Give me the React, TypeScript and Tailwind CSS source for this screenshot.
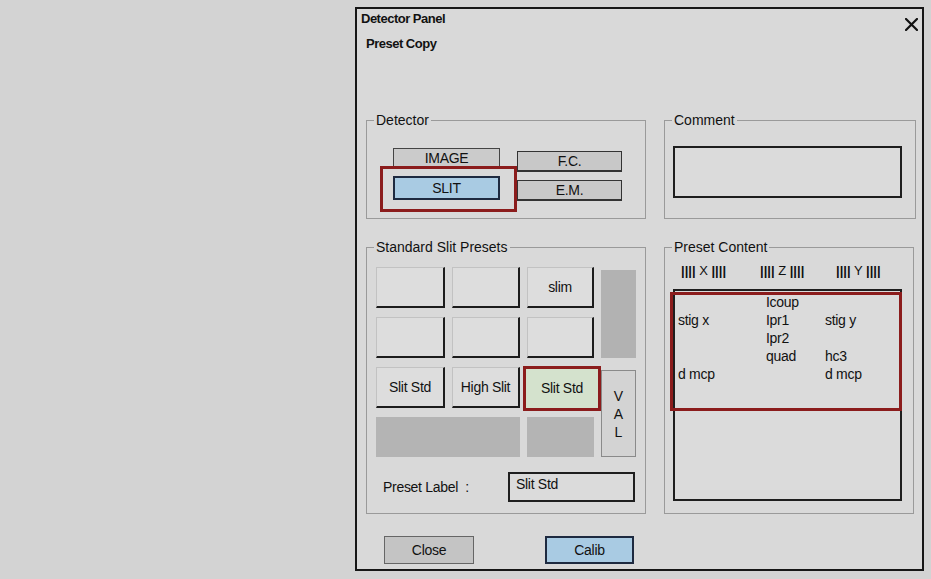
import React from "react";

// Raised preset tile used in the slit preset grid
function PresetButton({ label }: { label?: string }) {
  return (
    <button className="flex items-center justify-center bg-[#dddddd] border-t border-l border-[#c2c2c2] border-r-2 border-b-2 border-r-[#1c1c1c] border-b-[#1c1c1c] text-[14px] text-[#111] tracking-[-0.3px]">
      {label}
    </button>
  );
}

function CloseIcon() {
  return (
    <svg width="13" height="13" viewBox="0 0 13 13" className="mt-[6px]">
      <path d="M1 1 L12 12 M12 1 L1 12" stroke="#111" strokeWidth="2.2" strokeLinecap="square" />
    </svg>
  );
}

const COL_X = ["", "stig x", "", "", "d mcp"];
const COL_Z = ["Icoup", "Ipr1", "Ipr2", "quad", ""];
const COL_Y = ["", "stig y", "", "hc3", "d mcp"];

function ContentColumn({ rows }: { rows: string[] }) {
  return (
    <div className="flex flex-col">
      {rows.map((r, i) => (
        <span key={i} className="h-[18px] leading-[18px] whitespace-nowrap">
          {r || "\u00a0"}
        </span>
      ))}
    </div>
  );
}

export default function App() {
  return (
    <div className="w-[931px] h-[579px] overflow-hidden bg-[#d3d3d3] pt-[7px] pl-[355px] font-['Liberation_Sans',Arial,sans-serif] text-[#111]">
      <div className="w-[569px] h-[564px] border-2 border-[#161616] bg-[#d9d9d9] flex flex-col">
        {/* Title bar */}
        <div className="flex items-start justify-between pl-[4px] pr-[4px] pt-[3px]">
          <span className="text-[13px] leading-[14px] font-bold tracking-[-0.5px]">Detector Panel</span>
          <CloseIcon />
        </div>
        <div className="ml-[9px] mt-[6px] text-[13px] leading-[14px] font-bold tracking-[-0.5px]">Preset Copy</div>

        {/* Top row: detector + comment */}
        <div className="flex gap-[18px] pl-[9px] mt-[61px]">
          <fieldset className="w-[280px] h-[107px] border border-[#9a9a9a]">
            <legend className="ml-[7px] px-[2px] text-[14px] leading-[16px]">Detector</legend>
            <div className="flex pl-[13px] pt-[20px]">
              <div className="flex flex-col w-[137px]">
                <button className="ml-[13px] w-[107px] h-[19px] bg-[#cbcbcb] border border-[#444] text-[14px] leading-[16px] tracking-[-0.3px]">
                  IMAGE
                </button>
                <div className="-mt-[1px] w-[137px] h-[46px] border-[3px] border-[#8b1c1c] pt-[7px] pl-[10px]">
                  <button className="w-[107px] h-[24px] bg-[#a9cbe3] border-2 border-[#1e2a40] text-[14px] leading-[16px] tracking-[-0.3px]">
                    SLIT
                  </button>
                </div>
              </div>
              <div className="flex flex-col gap-[8px] pt-[3px]">
                <button className="w-[105px] h-[21px] bg-[#c8c8c8] border border-b-2 border-[#333] text-[14px] leading-[16px] tracking-[-0.3px]">
                  F.C.
                </button>
                <button className="w-[105px] h-[21px] bg-[#c8c8c8] border border-b-2 border-[#333] text-[14px] leading-[16px] tracking-[-0.3px]">
                  E.M.
                </button>
              </div>
            </div>
          </fieldset>

          <fieldset className="w-[252px] h-[107px] border border-[#9a9a9a]">
            <legend className="ml-[7px] px-[2px] text-[14px] leading-[16px]">Comment</legend>
            <div className="ml-[8px] mt-[18px] w-[229px] h-[52px] border-2 border-[#1e1e1e] bg-[#dbdbdb]" />
          </fieldset>
        </div>

        {/* Bottom row: presets + preset content */}
        <div className="flex gap-[18px] pl-[9px] mt-[20px]">
          <fieldset className="w-[280px] h-[275px] border border-[#9a9a9a]">
            <legend className="ml-[7px] px-[2px] text-[14px] leading-[16px]">Standard Slit Presets</legend>
            <div className="ml-[9px] mt-[12px] grid grid-cols-[69px_68px_67px_35px] grid-rows-[41px_41px_41px_40px] gap-x-[7px] gap-y-[9px]">
              <PresetButton />
              <PresetButton />
              <PresetButton label="slim" />
              <div className="row-span-2 bg-[#b2b2b2] mt-[3px]" />
              <PresetButton />
              <PresetButton />
              <PresetButton />
              <PresetButton label="Slit Std" />
              <PresetButton label="High Slit" />
              <button className="-ml-[4px] -mr-[7px] -mt-[1px] -mb-[3px] bg-[#d4e2cd] border-[3px] border-[#8b1c1c] text-[14px] tracking-[-0.3px]">
                Slit Std
              </button>
              <div className="row-span-2 mt-[3px] flex flex-col items-center justify-center bg-[#d3d3d3] border border-[#8a8a8a] text-[14px] leading-[18px]">
                <span>V</span>
                <span>A</span>
                <span>L</span>
              </div>
              <div className="col-span-2 bg-[#b4b4b4]" />
              <div className="bg-[#b4b4b4]" />
            </div>
            <div className="flex items-center mt-[15px] pl-[16px]">
              <span className="w-[125px] text-[14px] tracking-[-0.3px]">Preset Label&nbsp;&nbsp;:</span>
              <div className="w-[127px] h-[30px] border-2 border-[#1e1e1e] bg-[#dbdbdb] text-[14px] leading-[16px] pl-[6px] pt-[2px] tracking-[-0.3px]">
                Slit Std
              </div>
            </div>
          </fieldset>

          <fieldset className="w-[250px] h-[275px] border border-[#9a9a9a]">
            <legend className="ml-[7px] px-[2px] text-[14px] leading-[16px]">Preset Content</legend>
            <div className="mt-[8px] pl-[16px] grid grid-cols-[79px_76px_1fr] text-[13px] leading-[16px] whitespace-nowrap">
              <span><b>||||</b> X <b>||||</b></span>
              <span><b>||||</b> Z <b>||||</b></span>
              <span><b>||||</b> Y <b>||||</b></span>
            </div>
            <div className="ml-[8px] mt-[10px] w-[229px] h-[212px] border-2 border-[#1e1e1e] bg-[#dbdbdb]">
              <div className="-ml-[5px] mt-[1px] w-[232px] h-[119px] border-[3px] border-[#8b1c1c] pl-[5px]">
                <div className="-mt-[2px] grid grid-cols-[88px_59px_1fr] text-[14px] tracking-[-0.3px]">
                  <ContentColumn rows={COL_X} />
                  <ContentColumn rows={COL_Z} />
                  <ContentColumn rows={COL_Y} />
                </div>
              </div>
            </div>
          </fieldset>
        </div>

        {/* Action buttons */}
        <div className="flex pl-[27px] mt-[22px]">
          <button className="w-[90px] h-[28px] bg-[#c4c4c4] border border-[#666] text-[14px] tracking-[-0.3px]">Close</button>
          <button className="ml-[71px] w-[89px] h-[28px] bg-[#a9cbe3] border-2 border-[#1e2a40] text-[14px] tracking-[-0.3px]">Calib</button>
        </div>
      </div>
    </div>
  );
}
